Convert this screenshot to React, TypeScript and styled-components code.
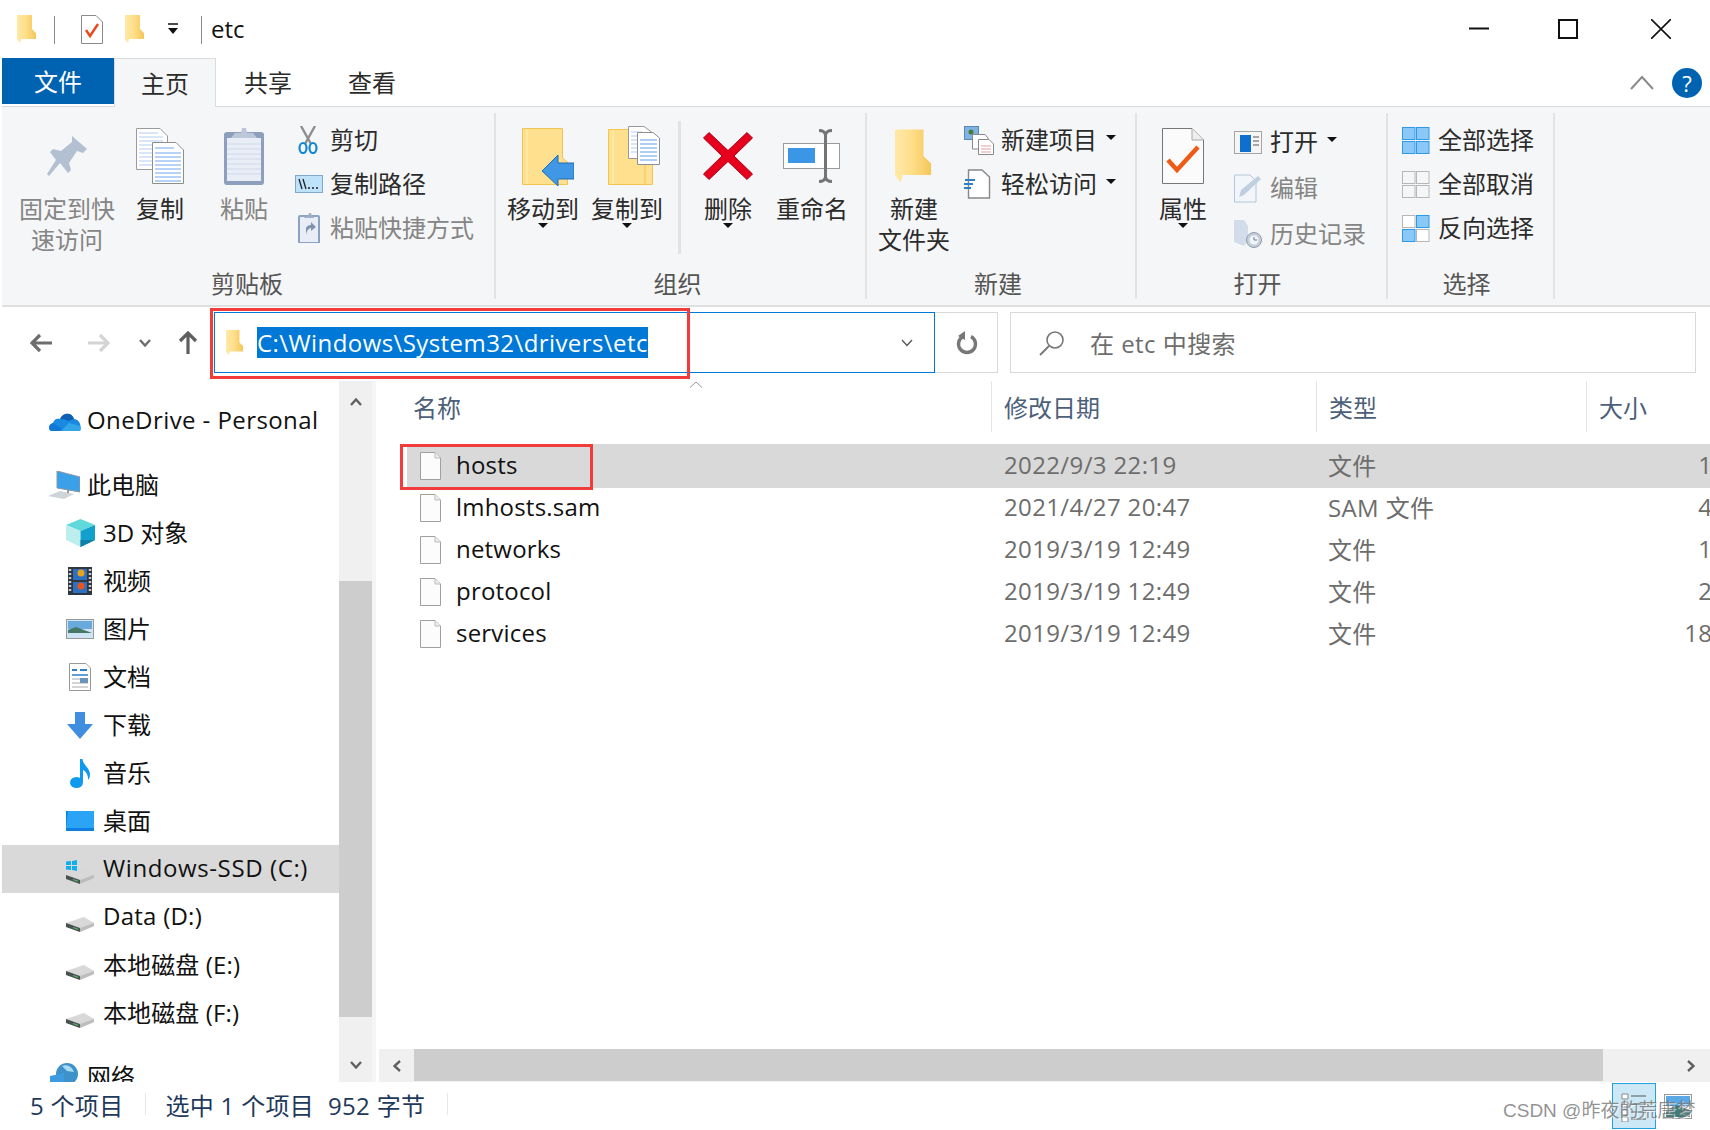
import React from 'react';
import styled, { createGlobalStyle } from 'styled-components';

const GlobalStyle = createGlobalStyle`
  html, body { margin: 0; padding: 0; background: #fff; }
  * { box-sizing: border-box; }
  body {
    font-family: "Open Sans", "Noto Sans CJK SC", sans-serif;
    font-size: 24px;
    color: #111;
  }
`;

const Window = styled.div`
  position: relative;
  width: 1710px;
  height: 1130px;
  padding-left: 2px;
  display: flex;
  flex-direction: column;
  overflow: hidden;
  background: #fff;
`;
const Spacer = styled.span<{ $w?: number }>`
  flex: ${({ $w }) => ($w ? 'none' : 1)};
  width: ${({ $w }) => ($w ? `${$w}px` : 'auto')};
`;

/* ---------- title bar ---------- */
const TitleBar = styled.div`
  height: 58px;
  flex: none;
  display: flex;
  align-items: center;
  padding-left: 15px;
`;
const QatSep = styled.div<{ $l: number; $r: number }>`
  width: 1px;
  height: 28px;
  background: #8c8c8c;
  margin: 2px ${({ $r }) => $r}px 0 ${({ $l }) => $l}px;
`;
const QatSlot = styled.div<{ $r: number }>`
  display: flex;
  align-items: center;
  margin-right: ${({ $r }) => $r}px;
`;
const Title = styled.span`
  font-size: 24px;
  line-height: 32px;
  color: #111;
`;
const WinButtons = styled.div`
  margin-left: auto;
  display: flex;
  align-items: center;
  padding-right: 39px;
  gap: 71px;
  margin-top: -1px;
`;
const WinMaxSlot = styled.div`
  display: flex;
  margin: 0 2px 0 -2px;
`;

/* ---------- tabs ---------- */
const TabRow = styled.div`
  height: 49px;
  flex: none;
  display: flex;
  align-items: flex-start;
  border-bottom: 1px solid #dadbdc;
`;
const FileTab = styled.div`
  width: 112px;
  height: 46px;
  background: #0063b1;
  color: #fff;
  display: flex;
  align-items: center;
  justify-content: center;
  padding-bottom: 2px;
`;
const Tab = styled.div<{ $active?: boolean }>`
  width: ${({ $active }) => ($active ? '102px' : '104px')};
  height: ${({ $active }) => ($active ? '50px' : '49px')};
  display: flex;
  align-items: center;
  justify-content: center;
  padding-bottom: 2px;
  color: #2b2b2b;
  ${({ $active }) =>
    $active &&
    `
    background: #f5f6f7;
    border: 1px solid #dadbdc;
    border-bottom: none;
  `}
`;
const TabRight = styled.div`
  margin-left: auto;
  height: 100%;
  display: flex;
  align-items: center;
  gap: 18px;
  padding-right: 8px;
  padding-top: 1px;
`;
const Help = styled.div`
  width: 30px;
  height: 30px;
  border-radius: 50%;
  background: #0063b1;
  color: #fff;
  font-size: 22px;
  line-height: 30px;
  text-align: center;
`;

/* ---------- ribbon ---------- */
const Ribbon = styled.div`
  height: 200px;
  flex: none;
  display: flex;
  padding-top: 6px;
  background: #f5f6f7;
  border-bottom: 2px solid #dfe0e1;
`;
const Group = styled.div<{ $w: number }>`
  width: ${({ $w }) => $w}px;
  height: 186px;
  flex: none;
  display: flex;
  flex-direction: column;
  border-right: 2px solid #e2e3e4;
`;
const GroupBody = styled.div<{ $pad?: number }>`
  flex: 1;
  display: flex;
  align-items: flex-start;
  padding-left: ${({ $pad }) => $pad ?? 0}px;
`;
const GroupLabel = styled.div<{ $pr: number }>`
  height: 31px;
  line-height: 31px;
  text-align: center;
  color: #555;
  padding-right: ${({ $pr }) => $pr}px;
  white-space: nowrap;
`;
const Big = styled.div<{ $w: number; $dim?: boolean }>`
  width: ${({ $w }) => $w}px;
  flex: none;
  display: flex;
  flex-direction: column;
  align-items: center;
  color: ${({ $dim }) => ($dim ? '#858585' : '#2b2b2b')};
`;
const BigIcon = styled.div<{ $shift?: number }>`
  height: 80px;
  padding: 6px 0 0 ${({ $shift }) => $shift ?? 0}px;
  display: flex;
  align-items: center;
  justify-content: center;
`;
const BigLabel = styled.div`
  line-height: 31px;
  text-align: center;
  white-space: nowrap;
`;
const DownCaret = styled.div`
  width: 0;
  height: 0;
  border-left: 5px solid transparent;
  border-right: 5px solid transparent;
  border-top: 5px solid #111;
`;
const BigCaret = styled(DownCaret)`
  margin-top: -1px;
`;
const InnerSep = styled.div`
  width: 3px;
  height: 133px;
  margin: 8px 0 0 9px;
  background: #e2e3e4;
  flex: none;
`;
const SmallCol = styled.div<{ $top: number; $step: number; $left?: number }>`
  padding-top: ${({ $top }) => $top}px;
  margin-left: ${({ $left }) => $left ?? 0}px;
  display: grid;
  grid-auto-rows: ${({ $step }) => $step}px;
`;
const SmallRow = styled.div<{ $dim?: boolean; $slot: number }>`
  display: grid;
  grid-template-columns: ${({ $slot }) => $slot}px auto auto;
  justify-content: start;
  align-items: center;
  color: ${({ $dim }) => ($dim ? '#858585' : '#2b2b2b')};
  white-space: nowrap;
  ${DownCaret} {
    margin: -6px 0 0 9px;
  }
`;
const SmallLabel = styled.span`
  padding-bottom: 4px;
`;

/* ---------- address row ---------- */
const AddressRow = styled.div`
  height: 74px;
  flex: none;
  display: flex;
  padding-top: 5px;
`;
const NavBtns = styled.div`
  width: 212px;
  height: 61px;
  flex: none;
  display: flex;
  align-items: center;
  padding-left: 28px;
`;
const NavSlot = styled.div<{ $w: number }>`
  width: ${({ $w }) => $w}px;
  flex: none;
  display: flex;
`;
const Address = styled.div`
  width: 721px;
  height: 61px;
  flex: none;
  display: flex;
  align-items: center;
  padding: 0 21px 0 11px;
  border: 1px solid #0078d7;
`;
const Selected = styled.span`
  margin-left: 13px;
  background: #0078d7;
  color: #fff;
  line-height: 31px;
  letter-spacing: 0.42px;
  white-space: nowrap;
`;
const Refresh = styled.div`
  width: 63px;
  height: 61px;
  flex: none;
  display: flex;
  align-items: center;
  justify-content: center;
  padding-left: 2px;
  border: 1px solid #d9d9d9;
  border-left: none;
`;
const Search = styled.div`
  width: 686px;
  height: 61px;
  flex: none;
  margin-left: 12px;
  display: flex;
  align-items: center;
  padding-left: 28px;
  gap: 25px;
  border: 1px solid #d9d9d9;
  color: #6d6d6d;
  letter-spacing: 0.45px;
`;

/* ---------- main ---------- */
const Main = styled.div`
  flex: 1;
  min-height: 0;
  display: flex;
`;
const Nav = styled.div`
  width: 337px;
  flex: none;
  padding-top: 16px;
  overflow: hidden;
`;
const NavRow = styled.div<{ $level: number; $active?: boolean; $gap?: boolean }>`
  height: 48px;
  margin-top: ${({ $gap }) => ($gap ? '16px' : '0')};
  display: flex;
  align-items: center;
  gap: 5px;
  padding-left: ${({ $level }) => ($level ? 60 : 44)}px;
  background: ${({ $active }) => ($active ? '#d9d9d9' : 'transparent')};
  white-space: nowrap;
`;
const NavIcon = styled.div`
  width: 36px;
  flex: none;
  display: flex;
  justify-content: center;
`;
const NavLabel = styled.span<{ $track: number }>`
  padding-bottom: 4px;
  letter-spacing: ${({ $track }) => $track}px;
`;
const VBar = styled.div`
  width: 33px;
  flex: none;
  display: flex;
  flex-direction: column;
  background: #f0f0f0;
`;
const VThumb = styled.div`
  margin-top: 158px;
  height: 436px;
  background: #cdcdcd;
`;
const ArrowBtn = styled.div<{ $size: number }>`
  height: ${({ $size }) => $size}px;
  flex: none;
  display: flex;
  align-items: center;
  justify-content: center;
`;
const VGutter = styled.div`
  width: 4px;
  flex: none;
  background: #f5f5f5;
`;
const Files = styled.div`
  position: relative;
  flex: 1;
  min-width: 0;
  display: flex;
  flex-direction: column;
  overflow: hidden;
`;
const Header = styled.div`
  height: 51px;
  flex: none;
  margin-left: 31px;
  display: grid;
  grid-template-columns: 584px 325px 270px 200px;
  color: #4c607a;
`;
const HeadCell = styled.div<{ $first?: boolean }>`
  display: flex;
  align-items: center;
  padding-left: ${({ $first }) => ($first ? 6 : 12)}px;
  border-left: ${({ $first }) => ($first ? 'none' : '1px solid #e5e5e5')};
`;
const SortCaret = styled.svg`
  position: absolute;
  left: 313px;
  top: 0;
`;
const Rows = styled.div`
  flex: 1;
  margin: 12px 0 0 31px;
  width: 1400px;
`;
const FileRow = styled.div<{ $selected?: boolean }>`
  height: ${({ $selected }) => ($selected ? 44 : 42)}px;
  margin-bottom: ${({ $selected }) => ($selected ? -1 : 0)}px;
  display: grid;
  grid-template-columns: 597px 324px 258px 164px;
  align-items: center;
  background: ${({ $selected }) => ($selected ? '#d9d9d9' : 'transparent')};
`;
const NameCell = styled.div`
  display: flex;
  align-items: center;
  gap: 15px;
  padding-left: 13px;
  letter-spacing: 0.2px;
`;
const FileName = styled.span`
  padding-bottom: 3px;
`;
const GrayCell = styled.div<{ $right?: boolean }>`
  color: #6d6d6d;
  padding-bottom: 3px;
  text-align: ${({ $right }) => ($right ? 'right' : 'left')};
  letter-spacing: 0.37px;
  white-space: nowrap;
`;
const HBar = styled.div`
  height: 33px;
  flex: none;
  margin-left: 3px;
  display: flex;
  background: #f0f0f0;
`;
const HThumb = styled.div`
  width: 1189px;
  background: #cdcdcd;
  margin-bottom: 1px;
`;
const HArrow = styled.div<{ $w: number }>`
  width: ${({ $w }) => $w}px;
  flex: none;
  display: flex;
  align-items: center;
  justify-content: center;
`;

/* ---------- status bar ---------- */
const StatusBar = styled.div`
  height: 48px;
  flex: none;
  display: flex;
  align-items: center;
  justify-content: space-between;
`;
const StatusText = styled.div`
  display: flex;
  align-items: center;
  padding: 0 0 4px 28px;
  color: #1e395b;
  letter-spacing: 0.3px;
  white-space: nowrap;
`;
const StatusSep = styled.div<{ $l: number; $r: number }>`
  width: 1px;
  height: 22px;
  background: #e8e8e8;
  margin: 0 ${({ $r }) => $r}px 0 ${({ $l }) => $l}px;
`;
const ViewBtns = styled.div`
  display: flex;
  align-items: center;
  padding-right: 10px;
`;
const ViewBtn = styled.div<{ $on?: boolean }>`
  width: 44px;
  height: 46px;
  display: flex;
  align-items: center;
  justify-content: center;
  background: ${({ $on }) => ($on ? '#cce8f6' : 'transparent')};
  border: 1px solid ${({ $on }) => ($on ? '#26a0da' : 'transparent')};
`;
const Watermark = styled.div`
  position: absolute;
  left: 1503px;
  top: 1098px;
  font-family: "Liberation Sans", "Noto Sans CJK SC", sans-serif;
  font-size: 19px;
  line-height: 26px;
  color: rgba(110, 110, 110, 0.75);
  text-shadow: 1px 1px 1px rgba(255, 255, 255, 0.7);
  white-space: nowrap;
`;
const RedBox = styled.div<{ $x: number; $y: number; $w: number; $h: number }>`
  position: absolute;
  left: ${({ $x }) => $x}px;
  top: ${({ $y }) => $y}px;
  width: ${({ $w }) => $w}px;
  height: ${({ $h }) => $h}px;
  border: 3px solid #f23c3c;
`;
const RotSvg = styled.svg<{ $rot?: number }>`
  flex: none;
  transform: rotate(${({ $rot }) => $rot ?? 0}deg);
`;
const FlipSvg = styled.svg<{ $flip?: boolean }>`
  flex: none;
  transform: scaleX(${({ $flip }) => ($flip ? -1 : 1)});
`;

/* ---------- drawn icons ---------- */
const Folder = ({ w = 20, h = 28 }: { w?: number; h?: number }) => (
  <svg width={w} height={h} viewBox="0 0 20 28">
    <defs>
      <linearGradient id="fold" x1="0" x2="1" y1="0" y2="0">
        <stop offset="0" stopColor="#ffe9a8" />
        <stop offset="0.45" stopColor="#ffdf8b" />
        <stop offset="1" stopColor="#f4c65a" />
      </linearGradient>
    </defs>
    <path d="M0 0H15V14L19 18V24H4L3 28L0 24Z" fill="url(#fold)" />
  </svg>
);
const QatCheckDoc = () => (
  <svg width="22" height="29" viewBox="0 0 22 29">
    <path d="M.5.5H15L21.500 7V28.500H.5Z" fill="#fff" stroke="#8a8a8a" />
    <path d="M5 15L9 21L17 9" fill="none" stroke="#e8491d" strokeWidth="2.4" />
  </svg>
);
const QatDrop = () => (
  <svg width="12" height="12" viewBox="0 0 12 12">
    <path d="M1 1H11" stroke="#111" strokeWidth="1.5" />
    <path d="M1 5H11L6 11Z" fill="#111" />
  </svg>
);
const WinMin = () => (
  <svg width="20" height="20" viewBox="0 0 20 20">
    <path d="M0 9.500H20" stroke="#111" strokeWidth="2" />
  </svg>
);
const WinMax = () => (
  <svg width="20" height="20" viewBox="0 0 20 20">
    <rect x="1" y="1" width="18" height="18" fill="none" stroke="#111" strokeWidth="2" />
  </svg>
);
const WinClose = () => (
  <svg width="20" height="20" viewBox="0 0 20 20">
    <path d="M0 0L20 20M20 0L0 20" stroke="#111" strokeWidth="1.6" />
  </svg>
);
const Collapse = () => (
  <svg width="24" height="15" viewBox="0 0 24 15">
    <path d="M1 14L12 2L23 14" fill="none" stroke="#8a8a8a" strokeWidth="2" />
  </svg>
);
const Pin = () => (
  <svg width="40" height="40" viewBox="0 0 40 40">
    <path
      d="M25 0L40 13L36 17L30 15L22 27L24 34L21 37L13 27L2 40L0 38L9 24L3 16L6 13L14 15L25 6Z"
      fill="#b3c0d1"
    />
  </svg>
);
const CopyDocs = () => (
  <svg width="48" height="56" viewBox="0 0 48 56">
    <path d="M.5.5H24L31.500 8V41.500H.5Z" fill="#fff" stroke="#9a9a9a" />
    <path d="M3 5H22M3 9H27M3 13H27M3 17H27M3 21H27M3 25H27M3 29H27M3 33H27M3 37H27" stroke="#b3cdf0" />
    <path d="M16.500 14.500H40L47.500 22V55.500H16.500Z" fill="#fff" stroke="#8e8e8e" />
    <path d="M19 20H38M19 25H45M19 29H45M19 33H45M19 37H45M19 41H45M19 45H45M19 49H45M19 53H45" stroke="#6ea6f0" />
  </svg>
);
const Clipboard = () => (
  <svg width="40" height="58" viewBox="0 0 40 58">
    <rect x="0" y="5" width="40" height="53" rx="3" fill="#8c9fbc" />
    <rect x="3" y="11" width="34" height="43" fill="#e9eef6" />
    <path d="M3 17H37M3 22H37M3 27H37M3 32H37M3 37H37M3 42H37M3 47H37" stroke="#cfd8e6" />
    <path d="M7 11L11 6H17L18 1H22L23 6H29L33 11Z" fill="#bcc8d9" />
  </svg>
);
const Scissors = () => (
  <svg width="26" height="28" viewBox="-3 0 26 28">
    <path d="M3 0L13 18M17 0L7 18" stroke="#8e8e8e" strokeWidth="2.4" />
    <ellipse cx="5" cy="22" rx="3.500" ry="5" fill="none" stroke="#1487d3" strokeWidth="2.200" />
    <ellipse cx="15" cy="22" rx="3.500" ry="5" fill="none" stroke="#1487d3" strokeWidth="2.200" />
  </svg>
);
const CopyPath = () => (
  <svg width="28" height="18" viewBox="0 0 28 18">
    <rect x=".5" y=".5" width="27" height="17" fill="#bfe2fb" stroke="#82a9cc" />
    <path d="M4 4L7 14M8 4L11 14" stroke="#222" strokeWidth="1.3" />
    <path d="M13 13H15M17 13H19M21 13H23" stroke="#222" strokeWidth="1.5" />
  </svg>
);
const PasteLink = () => (
  <svg width="26" height="30" viewBox="-3 0 26 30">
    <rect x="1" y="3" width="20" height="27" rx="1" fill="#e9eef6" stroke="#8ba3c2" strokeWidth="2" />
    <path d="M6 5L8 3H10L11 0H13L14 3H16V5Z" fill="#9fb0c6" />
    <path d="M8 22V16C8 13 11 12 13 12V9L18 14L13 18V15C11 15 9 17 8 22Z" fill="#7f93ad" />
  </svg>
);
const MoveTo = () => (
  <svg width="52" height="60" viewBox="0 0 52 60">
    <path d="M.5 2.500H40.500V32L45.500 36V58.500H.5Z" fill="#ffe08e" stroke="#f2c553" />
    <path d="M5 3V58" stroke="#fff0bd" />
    <path d="M36 37H52V53H36V60L20 45L36 29Z" fill="#3f97e5" stroke="#1f6fb5" />
  </svg>
);
const CopyTo = () => (
  <svg width="52" height="60" viewBox="0 0 52 60">
    <path d="M.5 3.500H40V32L44.500 36V58.500H.5Z" fill="#ffe08e" stroke="#f2c553" />
    <path d="M5 4V58" stroke="#fff0bd" />
    <path d="M37 36V58" stroke="#f2c553" />
    <path d="M20.500.5H36L43.500 6V32.500H20.500Z" fill="#fff" stroke="#999" />
    <path d="M23 6H34M23 10H41M23 14H41M23 18H41M23 22H41M23 26H41" stroke="#b3cdf0" />
    <path d="M29.500 6.500H45L51.500 12V38.500H29.500Z" fill="#fff" stroke="#8e8e8e" />
    <path d="M32 14H49M32 18H49M32 22H49M32 26H49M32 30H49M32 34H49" stroke="#5f9ded" />
  </svg>
);
const DeleteX = () => (
  <svg width="50" height="48" viewBox="0 0 50 48">
    <path
      d="M.5 6L6 .5L25 18.500L44 .5L49.500 6L31 24L49.500 42L44 47.500L25 29.500L6 47.500L.5 42L19 24Z"
      fill="#e6001e"
      stroke="#a80016"
    />
  </svg>
);
const Rename = () => (
  <svg width="58" height="54" viewBox="0 0 58 54">
    <rect x=".5" y="14.500" width="56" height="25" fill="#fff" stroke="#9a9a9a" />
    <rect x="5" y="19" width="27" height="15" fill="#3b97e5" />
    <path
      d="M36 1.500C39 1.500 42 3 42.500 6V48C42 51 39 52.500 36 52.500M49 1.500C46 1.500 43 3 42.500 6M42.500 48C43 51 46 52.500 49 52.500"
      fill="none"
      stroke="#757575"
      strokeWidth="3"
    />
  </svg>
);
const NewItem = () => (
  <svg width="30" height="29" viewBox="0 0 30 29">
    <rect x=".5" y=".5" width="14" height="13" fill="#7fb2e5" stroke="#5b87b5" />
    <circle cx="7" cy="6" r="2.500" fill="#4a7a36" />
    <path d="M8.500 8.500H21L24 12V23H8.500Z" fill="#fff" stroke="#888" />
    <path d="M14.500 13.500H25L29.500 18V28.500H14.500Z" fill="#fff" stroke="#888" />
    <path d="M17 20H27M17 23H27M17 26H27" stroke="#e2a1a1" />
  </svg>
);
const EasyAccess = () => (
  <svg width="27" height="30" viewBox="0 0 27 30">
    <path d="M4.500 1H18L25.500 8V29H4.500Z" fill="#fff" stroke="#888" strokeWidth="1.4" />
    <path d="M1 11H11M0 15H9M0 19H7" stroke="#2f7ec6" strokeWidth="2" />
  </svg>
);
const PropDoc = () => (
  <svg width="42" height="56" viewBox="0 0 42 56">
    <path d="M.5.5H30L41.500 12V55.500H.5Z" fill="#fbfbfb" stroke="#777" />
    <path d="M30 .5V12H41.500" fill="#eee" stroke="#aaa" />
    <path d="M6 32L15 42L36 19" fill="none" stroke="#ef5a16" strokeWidth="4.500" />
  </svg>
);
const OpenIcon = () => (
  <svg width="28" height="23" viewBox="0 0 28 23">
    <rect x=".5" y=".5" width="27" height="22" fill="#f5f5f5" stroke="#a5a5a5" />
    <rect x="6" y="4" width="11" height="17" fill="#0f6fd1" />
    <path d="M19 6H25M19 10H25M19 14H25" stroke="#8a8a8a" strokeWidth="1.4" />
  </svg>
);
const EditIcon = () => (
  <svg width="28" height="29" viewBox="0 0 28 29">
    <path d="M.5 1H16L22 7V28H.5Z" fill="#f2f6fb" stroke="#b4c6dc" />
    <path d="M5 23L7 16L24 2L27 5L10 21Z" fill="#bfcfe2" />
  </svg>
);
const HistoryIcon = () => (
  <svg width="28" height="28" viewBox="0 0 28 28">
    <path d="M0 0H10L14 6V20L10 26L0 22Z" fill="#d2dcea" />
    <circle cx="20" cy="20" r="7.500" fill="#c6cfdb" stroke="#909aa8" />
    <circle cx="20" cy="20" r="4.500" fill="#f1f4f8" />
    <path d="M20 17V20H23" stroke="#6f7a88" fill="none" />
  </svg>
);
const Panes = ({ on, faint }: { on: number[]; faint?: boolean }) => {
  const cells = [
    [0.5, 0.5],
    [14.5, 0.5],
    [0.5, 14.5],
    [14.5, 14.5],
  ];
  return (
    <svg width="28" height="27" viewBox="0 0 28 27">
      {cells.map(([x, y], i) => (
        <rect
          key={i}
          x={x}
          y={y}
          width="12.5"
          height="12"
          fill={on.includes(i) ? '#8ac8f8' : faint ? '#f5f6f7' : '#fff'}
          stroke={on.includes(i) ? '#2f9ae8' : '#b7b7b7'}
        />
      ))}
    </svg>
  );
};
const NavArrow = ({ color, flip }: { color: string; flip?: boolean }) => (
  <FlipSvg width="22" height="20" viewBox="0 0 22 20" $flip={flip}>
    <path d="M10 2L2 10L10 18M2 10H22" fill="none" stroke={color} strokeWidth="3.2" />
  </FlipSvg>
);
const UpArrow = () => (
  <svg width="20" height="23" viewBox="0 0 20 23">
    <path d="M2 10L10 2L18 10M10 2V23" fill="none" stroke="#5f5f5f" strokeWidth="3.2" />
  </svg>
);
const Chevron = ({ color = '#606060', width = 2.4, rot }: { color?: string; width?: number; rot?: number }) => (
  <RotSvg width="12" height="8" viewBox="0 0 12 8" $rot={rot}>
    <path d="M1 1L6 6.500L11 1" fill="none" stroke={color} strokeWidth={width} />
  </RotSvg>
);
const RefreshIcon = () => (
  <svg width="22" height="24" viewBox="0 0 22 24">
    <path d="M7 5.500A8.500 8.500 0 1 0 15 5.500" fill="none" stroke="#777" strokeWidth="3.400" />
    <path d="M9 0V9L2 5Z" fill="#777" />
  </svg>
);
const SearchIcon = () => (
  <svg width="26" height="26" viewBox="0 0 26 26">
    <circle cx="16" cy="10" r="8" fill="none" stroke="#777" strokeWidth="1.6" />
    <path d="M10 16L1 25" stroke="#777" strokeWidth="1.8" />
  </svg>
);
const OneDrive = () => (
  <svg width="33" height="22" viewBox="0 0 33 22">
    <path d="M4 21C0 21 0 14 5 13C6 9 9 8 12 9C15 2 24 2 26 9C31 9 34 15 32 21Z" fill="#1a8ae0" />
    <path d="M12 9C15 2 24 2 26 9L20 11C17 9 14 9 12 9Z" fill="#0f5fb5" />
    <path d="M4 21C0 21 0 14 5 13L14 19L12 21Z" fill="#0f78d4" />
    <path d="M13 21L21 13L32 16C33 18 33 20 32 21Z" fill="#33a6ea" />
  </svg>
);
const Computer = () => (
  <svg width="32" height="28" viewBox="0 0 32 28">
    <path d="M9 0L32 6V21L9 17Z" fill="#3aa0e8" stroke="#8a97a5" />
    <path d="M0 25L12 20L26 23L16 28Z" fill="#cfd4da" />
    <path d="M20 19V22" stroke="#999" strokeWidth="2" />
  </svg>
);
const Cube = () => (
  <svg width="29" height="28" viewBox="0 0 29 28">
    <path d="M14.500 0L29 6L14.500 12L0 6Z" fill="#5fd9d9" />
    <path d="M0 6L14.500 12V28L0 21Z" fill="#bdeeee" />
    <path d="M14.500 12L29 6V21L14.500 28Z" fill="#12a0cf" />
    <path d="M14.500 21V28L29 21Z" fill="#0e7fa6" />
  </svg>
);
const Film = () => (
  <svg width="24" height="28" viewBox="0 0 24 28">
    <rect width="24" height="28" fill="#2f3640" />
    <path d="M2 2V26M22 2V26" stroke="#c9c9c9" strokeWidth="2.500" strokeDasharray="2 2" />
    <rect x="5" y="2" width="14" height="11" fill="#2d6fc0" />
    <rect x="5" y="15" width="14" height="11" fill="#2d6fc0" />
    <circle cx="13" cy="6" r="3.500" fill="#e8a21e" />
    <circle cx="13" cy="19" r="3.500" fill="#e8541e" />
  </svg>
);
const Picture = () => (
  <svg width="28" height="20" viewBox="0 0 28 20">
    <rect x=".5" y=".5" width="27" height="19" fill="#cfe5f5" stroke="#999" />
    <rect x="2" y="2" width="24" height="8" fill="#6aa9dc" />
    <path d="M2 11L10 8L26 14H2Z" fill="#46786a" />
  </svg>
);
const Doc = () => (
  <svg width="22" height="28" viewBox="0 0 22 28">
    <path d="M.5.5H17L21.500 5V27.500H.5Z" fill="#fff" stroke="#999" />
    <path d="M3 7H8M11 7H18" stroke="#2f7ec6" strokeWidth="2" />
    <path d="M3 12H19" stroke="#2f7ec6" strokeWidth="1.5" />
    <path d="M3 16H19M3 20H19M3 24H19" stroke="#aaa" />
    <rect x="11" y="15" width="8" height="5" fill="#6a95b8" />
  </svg>
);
const Download = () => (
  <svg width="26" height="27" viewBox="0 0 26 27">
    <path d="M8 0H18V12H26L13 27L0 12H8Z" fill="#3f8ee0" />
  </svg>
);
const Note = () => (
  <svg width="20" height="29" viewBox="0 0 20 29">
    <ellipse cx="6.500" cy="23.500" rx="6.500" ry="5.500" fill="#0f9aee" />
    <path d="M10 0H12.500C13 6 20 9 20 15.500C20 18 19 20 18 21C18.500 15 15 12 13 11V23H10Z" fill="#0f9aee" />
  </svg>
);
const Desktop = () => (
  <svg width="28" height="20" viewBox="0 0 28 20">
    <rect width="28" height="20" fill="#0c7fe0" />
    <path d="M2 0H28V17H0Z" fill="#2ba4f6" />
  </svg>
);
const Drive = ({ windows }: { windows?: boolean }) => (
  <svg width="28" height="30" viewBox="0 -6 28 30">
    {windows && (
      <path d="M0 1.500L5 1V5H0ZM6 1L11 0V5H6ZM0 6H5V10L0 9.500ZM6 6H11V11L6 10Z" fill="#12aeee" />
    )}
    <path d="M0 15L18 9L28 15V18L14 24L0 19Z" fill="#d8d8d8" />
    <path d="M14 20L28 15V18L14 24Z" fill="#bdbdbd" />
    <path d="M0 15L14 20V24L0 19Z" fill="#4a5050" />
    <path d="M7 19.500L12 21.300" stroke="#49c45a" strokeWidth="1.2" />
  </svg>
);
const Network = () => (
  <svg width="28" height="30" viewBox="0 0 28 30">
    <circle cx="17" cy="12" r="11" fill="#3f92c9" />
    <path d="M12 4C17 2 22 5 24 10L17 9Z" fill="#a9dcf3" />
    <path d="M0 14L14 11V30H0Z" fill="#3f9be0" />
  </svg>
);
const FileIcon = () => (
  <svg width="21" height="28" viewBox="0 0 21 28">
    <path d="M.5.5H15L20.500 6V27.500H.5Z" fill="#fcfcfc" stroke="#a0a0a0" />
    <path d="M15 .5V6H20.500" fill="#eee" stroke="#bbb" />
  </svg>
);
const DetailsView = () => (
  <svg width="26" height="32" viewBox="0 0 26 32">
    <path d="M1 4H7V9H1ZM1 12H7V17H1ZM1 20H7V25H1ZM1 27H7V32H1Z" fill="#fff" stroke="#888" />
    <path d="M10 6H25M10 14H25M10 22H25M10 29H25" stroke="#555" />
  </svg>
);
const TilesView = () => (
  <svg width="28" height="25" viewBox="0 0 28 25">
    <rect x=".5" y=".5" width="27" height="24" fill="#fff" stroke="#999" />
    <rect x="2" y="2" width="24" height="10" fill="#5aa8e6" />
    <path d="M2 17L12 11L26 16V23H2Z" fill="#3f7a77" />
  </svg>
);

const navItems: { label: string; icon: React.ReactNode; level: number; gap?: boolean; active?: boolean; track?: number }[] = [
  { label: 'OneDrive - Personal', icon: <OneDrive />, level: 0, track: 0.42 },
  { label: '此电脑', icon: <Computer />, level: 0, gap: true },
  { label: '3D 对象', icon: <Cube />, level: 1 },
  { label: '视频', icon: <Film />, level: 1 },
  { label: '图片', icon: <Picture />, level: 1 },
  { label: '文档', icon: <Doc />, level: 1 },
  { label: '下载', icon: <Download />, level: 1 },
  { label: '音乐', icon: <Note />, level: 1 },
  { label: '桌面', icon: <Desktop />, level: 1 },
  { label: 'Windows-SSD (C:)', icon: <Drive windows />, level: 1, active: true, track: 0.6 },
  { label: 'Data (D:)', icon: <Drive />, level: 1, track: 0.25 },
  { label: '本地磁盘 (E:)', icon: <Drive />, level: 1, track: 0.12 },
  { label: '本地磁盘 (F:)', icon: <Drive />, level: 1, track: 0.12 },
  { label: '网络', icon: <Network />, level: 0, gap: true },
];

const files = [
  { name: 'hosts', date: '2022/9/3 22:19', type: '文件', size: '1 KB', selected: true },
  { name: 'lmhosts.sam', date: '2021/4/27 20:47', type: 'SAM 文件', size: '4 KB' },
  { name: 'networks', date: '2019/3/19 12:49', type: '文件', size: '1 KB' },
  { name: 'protocol', date: '2019/3/19 12:49', type: '文件', size: '2 KB' },
  { name: 'services', date: '2019/3/19 12:49', type: '文件', size: '18 KB' },
];

export default function App() {
  return (
    <Window>
      <GlobalStyle />
      <TitleBar>
        <Folder />
        <QatSep $l={17} $r={26} />
        <QatSlot $r={22}>
          <QatCheckDoc />
        </QatSlot>
        <QatSlot $r={22}>
          <Folder />
        </QatSlot>
        <QatDrop />
        <QatSep $l={22} $r={9} />
        <Title>etc</Title>
        <WinButtons>
          <WinMin />
          <WinMaxSlot>
            <WinMax />
          </WinMaxSlot>
          <WinClose />
        </WinButtons>
      </TitleBar>

      <TabRow>
        <FileTab>文件</FileTab>
        <Tab $active>主页</Tab>
        <Tab>共享</Tab>
        <Tab>查看</Tab>
        <TabRight>
          <Collapse />
          <Help>?</Help>
        </TabRight>
      </TabRow>

      <Ribbon>
        <Group $w={494}>
          <GroupBody $pad={15}>
            <Big $w={100} $dim>
              <BigIcon><Pin /></BigIcon>
              <BigLabel>固定到快<br />速访问</BigLabel>
            </Big>
            <Big $w={86}>
              <BigIcon><CopyDocs /></BigIcon>
              <BigLabel>复制</BigLabel>
            </Big>
            <Big $w={82} $dim>
              <BigIcon><Clipboard /></BigIcon>
              <BigLabel>粘贴</BigLabel>
            </Big>
            <SmallCol $top={5} $step={44} $left={10}>
              <SmallRow $slot={35}><Scissors /><SmallLabel>剪切</SmallLabel></SmallRow>
              <SmallRow $slot={35}><CopyPath /><SmallLabel>复制路径</SmallLabel></SmallRow>
              <SmallRow $slot={35} $dim><PasteLink /><SmallLabel>粘贴快捷方式</SmallLabel></SmallRow>
            </SmallCol>
          </GroupBody>
          <GroupLabel $pr={2}>剪贴板</GroupLabel>
        </Group>

        <Group $w={371}>
          <GroupBody $pad={5}>
            <Big $w={84}>
              <BigIcon $shift={10}><MoveTo /></BigIcon>
              <BigLabel>移动到</BigLabel>
              <BigCaret />
            </Big>
            <Big $w={84}>
              <BigIcon $shift={14}><CopyTo /></BigIcon>
              <BigLabel>复制到</BigLabel>
              <BigCaret />
            </Big>
            <InnerSep />
            <Big $w={94}>
              <BigIcon><DeleteX /></BigIcon>
              <BigLabel>删除</BigLabel>
              <BigCaret />
            </Big>
            <Big $w={74}>
              <BigIcon><Rename /></BigIcon>
              <BigLabel>重命名</BigLabel>
            </Big>
          </GroupBody>
          <GroupLabel $pr={6}>组织</GroupLabel>
        </Group>

        <Group $w={270}>
          <GroupBody>
            <Big $w={94}>
              <BigIcon><Folder w={38} h={56} /></BigIcon>
              <BigLabel>新建<br />文件夹</BigLabel>
            </Big>
            <SmallCol $top={5} $step={44} $left={3}>
              <SmallRow $slot={37}><NewItem /><SmallLabel>新建项目</SmallLabel><DownCaret /></SmallRow>
              <SmallRow $slot={37}><EasyAccess /><SmallLabel>轻松访问</SmallLabel><DownCaret /></SmallRow>
            </SmallCol>
          </GroupBody>
          <GroupLabel $pr={6}>新建</GroupLabel>
        </Group>

        <Group $w={251}>
          <GroupBody>
            <Big $w={92}>
              <BigIcon><PropDoc /></BigIcon>
              <BigLabel>属性</BigLabel>
              <BigCaret />
            </Big>
            <SmallCol $top={6} $step={46} $left={5}>
              <SmallRow $slot={36}><OpenIcon /><SmallLabel>打开</SmallLabel><DownCaret /></SmallRow>
              <SmallRow $slot={36} $dim><EditIcon /><SmallLabel>编辑</SmallLabel></SmallRow>
              <SmallRow $slot={36} $dim><HistoryIcon /><SmallLabel>历史记录</SmallLabel></SmallRow>
            </SmallCol>
          </GroupBody>
          <GroupLabel $pr={8}>打开</GroupLabel>
        </Group>

        <Group $w={167}>
          <GroupBody $pad={14}>
            <SmallCol $top={5} $step={44}>
              <SmallRow $slot={36}><Panes on={[0, 1, 2, 3]} /><SmallLabel>全部选择</SmallLabel></SmallRow>
              <SmallRow $slot={36}><Panes on={[]} faint /><SmallLabel>全部取消</SmallLabel></SmallRow>
              <SmallRow $slot={36}><Panes on={[1, 2]} /><SmallLabel>反向选择</SmallLabel></SmallRow>
            </SmallCol>
          </GroupBody>
          <GroupLabel $pr={8}>选择</GroupLabel>
        </Group>
      </Ribbon>

      <AddressRow>
        <NavBtns>
          <NavSlot $w={58}><NavArrow color="#6d6d6d" /></NavSlot>
          <NavSlot $w={51}><NavArrow color="#d4d4d4" flip /></NavSlot>
          <NavSlot $w={39}><Chevron color="#6d6d6d" /></NavSlot>
          <UpArrow />
        </NavBtns>
        <Address>
          <Folder w={18} h={25} />
          <Selected>C:\Windows\System32\drivers\etc</Selected>
          <Spacer />
          <Chevron color="#555" width={1.3} />
        </Address>
        <Refresh><RefreshIcon /></Refresh>
        <Search>
          <SearchIcon />
          在 etc 中搜索
        </Search>
      </AddressRow>

      <Main>
        <Nav>
          {navItems.map((n) => (
            <NavRow key={n.label} $level={n.level} $active={n.active} $gap={n.gap}>
              <NavIcon>{n.icon}</NavIcon>
              <NavLabel $track={n.track ?? 0}>{n.label}</NavLabel>
            </NavRow>
          ))}
        </Nav>
        <VBar>
          <ArrowBtn $size={42}><Chevron rot={180} /></ArrowBtn>
          <VThumb />
          <Spacer />
          <ArrowBtn $size={34}><Chevron /></ArrowBtn>
        </VBar>
        <VGutter />
        <Files>
          <SortCaret width="14" height="7" viewBox="0 0 14 7">
            <path d="M1 6.500L7 1L13 6.500" fill="none" stroke="#9a9a9a" />
          </SortCaret>
          <Header>
            <HeadCell $first>名称</HeadCell>
            <HeadCell>修改日期</HeadCell>
            <HeadCell>类型</HeadCell>
            <HeadCell>大小</HeadCell>
          </Header>
          <Rows>
            {files.map((f) => (
              <FileRow key={f.name} $selected={f.selected}>
                <NameCell>
                  <FileIcon />
                  <FileName>{f.name}</FileName>
                </NameCell>
                <GrayCell>{f.date}</GrayCell>
                <GrayCell>{f.type}</GrayCell>
                <GrayCell $right>{f.size}</GrayCell>
              </FileRow>
            ))}
          </Rows>
          <HBar>
            <HArrow $w={35}><Chevron rot={90} /></HArrow>
            <HThumb />
            <Spacer />
            <HArrow $w={38}><Chevron rot={-90} /></HArrow>
          </HBar>
        </Files>
      </Main>

      <StatusBar>
        <StatusText>
          5 个项目
          <StatusSep $l={22} $r={19} />
          选中 1 个项目
          <Spacer $w={14} />
          952 字节
          <StatusSep $l={22} $r={0} />
        </StatusText>
        <ViewBtns>
          <ViewBtn $on><DetailsView /></ViewBtn>
          <ViewBtn><TilesView /></ViewBtn>
        </ViewBtns>
      </StatusBar>

      <RedBox $x={210} $y={308} $w={480} $h={71} />
      <RedBox $x={400} $y={444} $w={193} $h={46} />
      <Watermark>CSDN @昨夜的荒唐梦</Watermark>
    </Window>
  );
}
